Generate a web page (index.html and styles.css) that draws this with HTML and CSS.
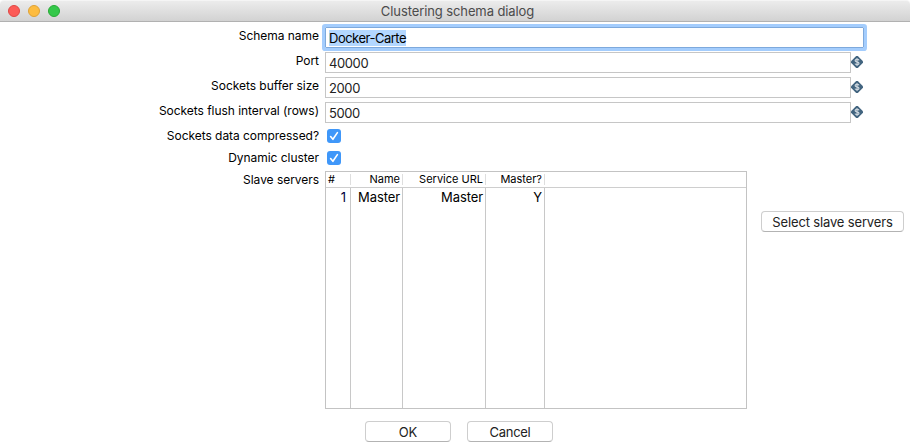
FILE: index.html
```html
<!DOCTYPE html>
<html lang="en">
<head>
<meta charset="utf-8">
<title>Clustering schema dialog</title>
<link rel="stylesheet" href="styles.css">
</head>
<body>
<svg class="defs" width="0" height="0" aria-hidden="true">
  <symbol id="var" viewBox="0 0 12 12">
    <path d="M5.2 0 H6.8 L12 5.2 V6.8 L6.8 12 H5.2 L0 6.8 V5.2 Z" fill="#42647f"/>
    <path d="M8 4.4 C7.6 3.2 4.1 3 4.1 4.7 C4.1 6.3 8 5.6 8 7.3 C8 9 4.5 8.9 4 7.6 M6 2 V10" fill="none" stroke="#cbd5dd" stroke-width="1.2"/>
  </symbol>
  <symbol id="check" viewBox="0 0 14 14">
    <path d="M3.6 7.5 L5.9 10.3 L10.4 3.6" fill="none" stroke="#fff" stroke-width="1.6" stroke-linecap="round" stroke-linejoin="round"/>
  </symbol>
</svg>
<header class="titlebar">
  <div class="lights"><i class="light red"></i><i class="light yellow"></i><i class="light green"></i></div>
  <h1 class="title">Clustering schema dialog</h1>
</header>
<main class="form">
  <div class="row"><label class="label">Schema name</label><div class="field focused"><span class="selected">Docker-Carte</span></div></div>
  <div class="row"><label class="label">Port</label><div class="field"><span>40000</span></div><svg class="var"><use href="#var"/></svg></div>
  <div class="row"><label class="label">Sockets buffer size</label><div class="field"><span>2000</span></div><svg class="var"><use href="#var"/></svg></div>
  <div class="row"><label class="label">Sockets flush interval (rows)</label><div class="field"><span>5000</span></div><svg class="var"><use href="#var"/></svg></div>
  <div class="row short"><label class="label">Sockets data compressed?</label><span class="checkbox"><svg><use href="#check"/></svg></span></div>
  <div class="row short"><label class="label">Dynamic cluster</label><span class="checkbox"><svg><use href="#check"/></svg></span></div>
  <div class="row servers">
    <label class="label">Slave servers</label>
    <div class="table">
      <div class="thead"><span class="num">#</span><span>Name</span><span>Service URL</span><span>Master?</span><span class="last"></span></div>
      <div class="tbody"><span class="index">1</span><span>Master</span><span>Master</span><span>Y</span><span class="last"></span></div>
    </div>
    <button class="button select">Select slave servers</button>
  </div>
</main>
<footer class="actions"><button class="button">OK</button><button class="button cancel">Cancel</button></footer>
</body>
</html>
```
FILE: styles.css
```css
* { box-sizing: border-box; }
body {
  margin: 0;
  width: 910px;
  height: 447px;
  overflow: hidden;
  background: #fff;
  color: #000;
  font: 13px/18px Inter, "Liberation Sans", sans-serif;
  white-space: nowrap;
}
.defs { display: none; }
.titlebar {
  display: grid;
  grid-template-columns: 64px 1fr 59px;
  align-items: center;
  height: 22px;
  background: linear-gradient(#ececec, #d2d2d2);
  border-top: 1px solid #f5f5f5;
  border-bottom: 1px solid #b1b1b1;
  border-radius: 4px 4px 0 0;
}
.lights { display: flex; gap: 8px; padding-left: 8px; }
.light { width: 12px; height: 12px; border: 1px solid; border-radius: 50%; }
.red { background: #fc5b57; border-color: #df4744; }
.yellow { background: #fdbc40; border-color: #dea236; }
.green { background: #34c84a; border-color: #27aa35; }
.title {
  margin: 0;
  color: #4b4b4b;
  font-size: 13px;
  font-weight: 400;
  line-height: 18px;
  text-align: center;
  letter-spacing: -.1px;
}
.form { padding-top: 5px; }
.row { display: flex; height: 25px; }
.short { height: 22px; }
.label {
  width: 319px;
  margin-right: 6px;
  text-align: right;
  font-size: 12px;
  letter-spacing: -.04px;
}
.field {
  width: 526px;
  height: 21px;
  padding: 2px 3px 0;
  border: 1px solid #c6c6c6;
  color: #222;
  line-height: 17px;
  letter-spacing: -.4px;
}
.focused {
  width: 539px;
  border-color: #7ea9dc;
  box-shadow: 0 0 0 3px #a4cdfd;
  border-radius: 1px;
  color: #000;
  letter-spacing: -.5px;
}
.selected { display: block; width: 77px; height: 16px; line-height: 17px; background: #b3d7ff; }
.var { width: 12px; height: 12px; margin: 4px 0 0; }
.checkbox {
  width: 14px;
  height: 14px;
  margin: 2px 0 0 2px;
  border-radius: 3px;
  background: #3f97f9;
}
.checkbox svg { display: block; width: 14px; height: 14px; }
.servers { height: 238px; }
.table {
  display: flex;
  flex-direction: column;
  width: 422px;
  height: 238px;
  border: 1px solid #c3c3c3;
}
.thead, .tbody { display: grid; grid-template-columns: 25px 52px 83px 59px 1fr; }
.thead { height: 16px; border-bottom: 1px solid #cecece; font-size: 11px; }
.thead span { height: 11px; margin-top: 2px; line-height: 11px; padding-right: 2px; border-right: 1px solid #dedede; text-align: right; }
.thead .num { padding-left: 2px; text-align: left; }
.tbody { flex: 1; letter-spacing: -.1px; }
.tbody span { padding: 0 2px 0 0; border-right: 1px solid #c8c8c8; text-align: right; }
.tbody .index { padding-right: 4px; color: #000040; }
.table .last { border: 0; }
.button {
  width: 86px;
  height: 21px;
  padding: 1px 0 0;
  border: 1px solid #cecece;
  border-bottom-color: #b3b3b3;
  border-radius: 4px;
  background: #fff;
  color: #222;
  font: inherit;
  line-height: 18px;
  letter-spacing: -.15px;
}
.cancel { letter-spacing: -.3px; }
.select { width: 143px; margin: 40px 0 0 14px; }
.actions { display: flex; gap: 16px; padding: 12px 0 0 365px; }
```
